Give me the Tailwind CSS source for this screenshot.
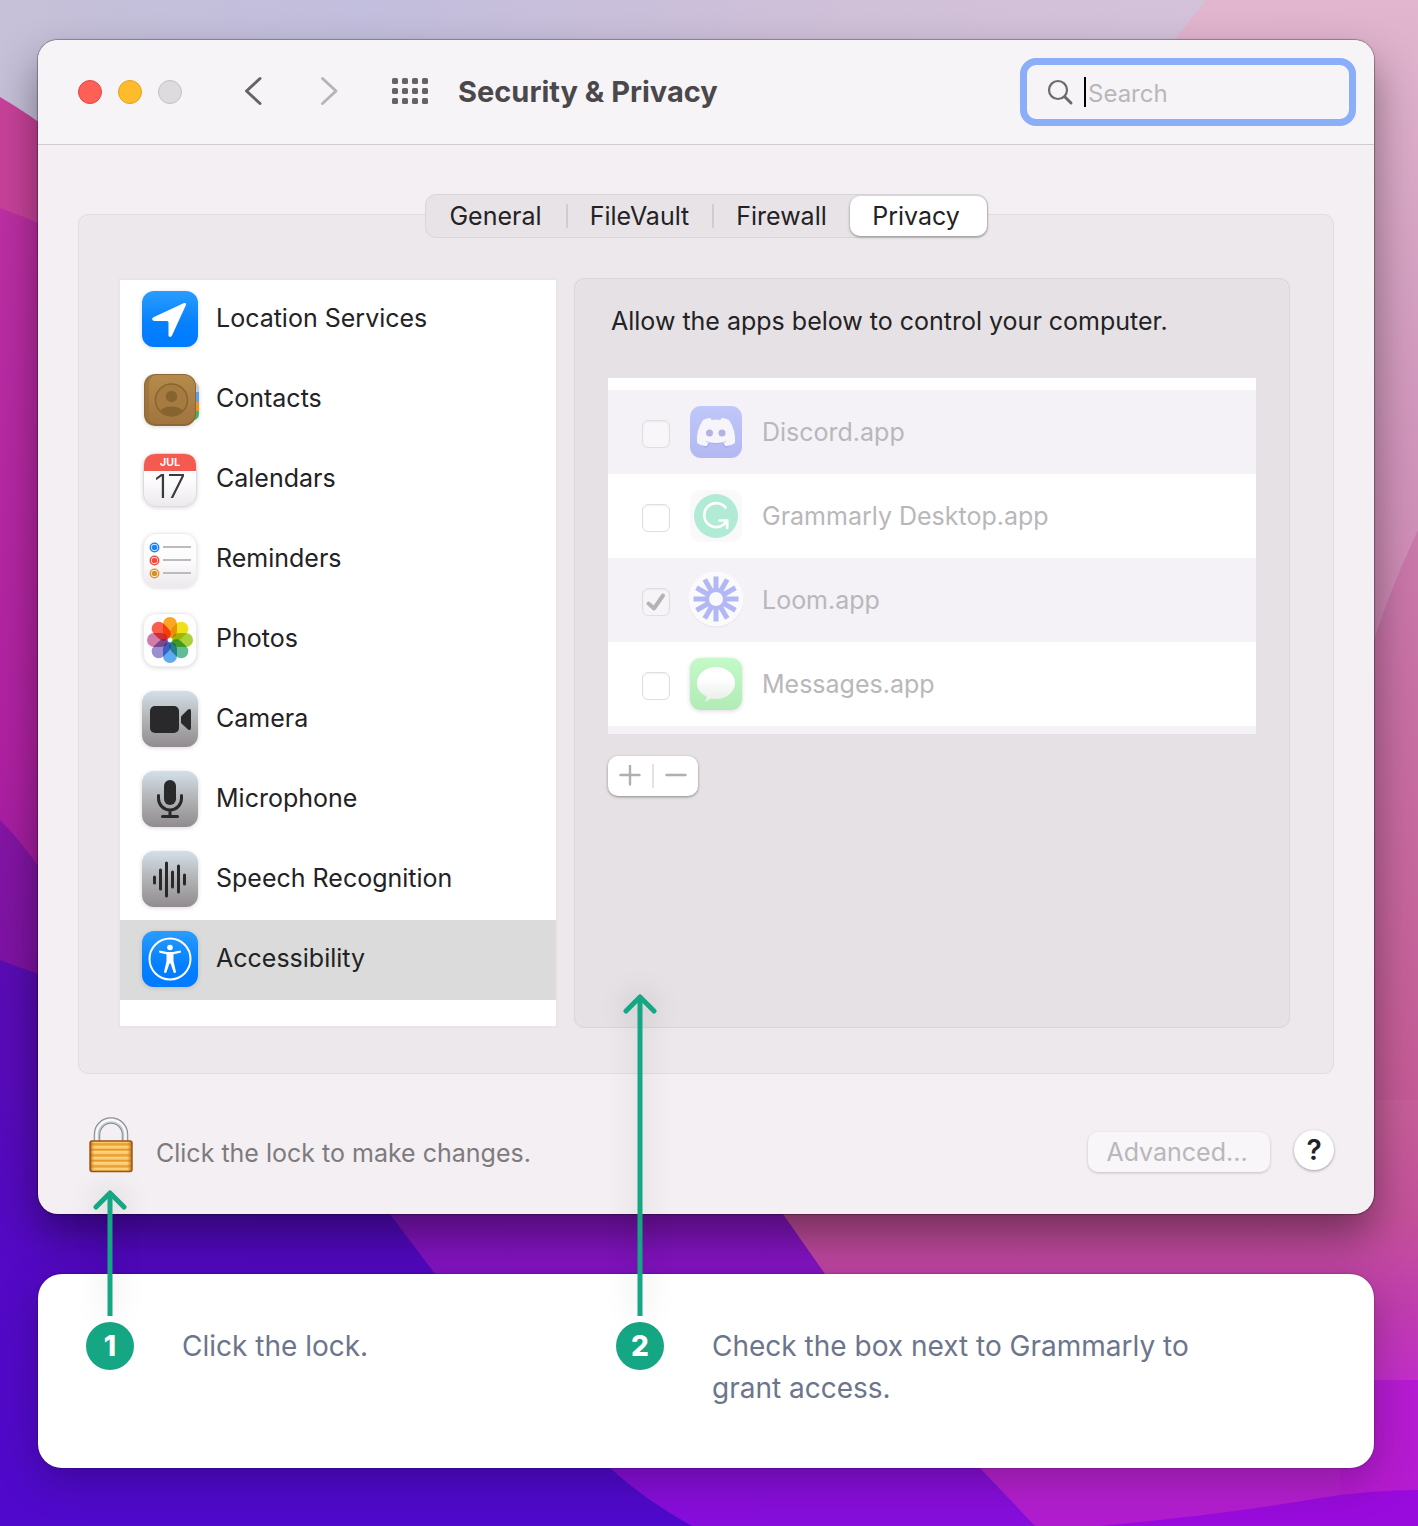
<!DOCTYPE html>
<html lang="en">
<head>
  <meta charset="UTF-8" />
  <meta name="viewport" content="width=device-width, initial-scale=1.0" />
  <title>Security &amp; Privacy</title>
  <script src="https://cdn.jsdelivr.net/npm/@tailwindcss/browser@4"></script>
</head>
<body class="relative min-h-screen font-['Inter',sans-serif] text-[#232224]">

  <!-- Wallpaper -->
  <svg class="absolute inset-0 w-full h-full" viewBox="0 0 1418 1526" preserveAspectRatio="none" aria-hidden="true">
    <defs>
      <linearGradient id="wpSky" x1="0" x2="1" y1="0" y2="0">
        <stop offset="0" stop-color="#c6c0d8" /><stop offset=".25" stop-color="#c2bedd" /><stop offset=".6" stop-color="#d0c0d8" /><stop offset="1" stop-color="#d6c3da" />
      </linearGradient>
      <linearGradient id="wpLeft" x1="0" x2="0" y1="0" y2="1">
        <stop offset="0" stop-color="#bd2fa4" /><stop offset=".5" stop-color="#b021a2" /><stop offset="1" stop-color="#7a0fa6" />
      </linearGradient>
      <linearGradient id="wpBlue" x1="0" x2="0" y1="0" y2="1">
        <stop offset="0" stop-color="#5a0cb4" /><stop offset=".5" stop-color="#5409c4" /><stop offset="1" stop-color="#4f09cc" />
      </linearGradient>
      <linearGradient id="wpPurple" x1="0" x2="0" y1="0" y2="1">
        <stop offset="0" stop-color="#8518b8" /><stop offset="1" stop-color="#870ddc" />
      </linearGradient>
      <linearGradient id="wpRight" x1="0" x2="0" y1="0" y2="1">
        <stop offset="0" stop-color="#e2b6cf" /><stop offset=".2" stop-color="#d5a0c2" /><stop offset=".4" stop-color="#cf8ab5" /><stop offset=".7" stop-color="#c8649a" /><stop offset=".8" stop-color="#c4509a" /><stop offset=".86" stop-color="#c03cb0" /><stop offset=".91" stop-color="#c22ccc" /><stop offset="1" stop-color="#b01bd0" />
      </linearGradient>
    </defs>
    <rect width="1418" height="1526" fill="url(#wpSky)" />
    <path d="M1206 0H1418V1526H700V600Q1080 160 1206 0Z" fill="url(#wpRight)" />
    <path d="M1418 530Q1390 590 1374 640V1100H1418Z" fill="#c24f95" opacity=".35" />
    <path d="M0 97Q60 132 120 190V1300H0Z" fill="#c8429a" />
    <path d="M0 208Q60 228 120 270V1300H0Z" fill="url(#wpLeft)" />
    <path d="M0 820Q30 850 60 900V1100H0Z" fill="#6d0fa6" opacity=".6" />
    <path d="M300 1100H700L783 1214L825 1274L980 1468L1035 1526H600Z" fill="url(#wpPurple)" />
    <path d="M0 960L38 974Q300 1080 390 1214L435 1274L610 1468Q645 1500 692 1526H0Z" fill="url(#wpBlue)" />
    <path d="M1340 1380H1418V1526H1340Z" fill="#b51bd0" />
    <path d="M1100 1526Q1230 1514 1320 1498Q1370 1490 1418 1490V1526Z" fill="#990bdc" />
  </svg>

  <main class="relative pt-10 pb-[58px] pl-[38px] pr-11">

    <!-- Preferences window -->
    <section class="rounded-[20px] bg-[#f3eff3] shadow-[0_0_1px_1px_rgba(0,0,0,0.3),0_22px_44px_rgba(0,0,0,0.42)]">

      <!-- Title bar -->
      <header class="flex items-center h-[105px] pl-10 pr-[18px] rounded-t-[20px] bg-[#f6f4f7] border-b border-[#cfcbcf]">
        <div class="flex gap-4">
          <button aria-label="Close" class="size-6 rounded-full bg-[#fe5f57] border border-[#e2453e]"></button>
          <button aria-label="Minimize" class="size-6 rounded-full bg-[#febb2c] border border-[#e1a01e]"></button>
          <button aria-label="Zoom" disabled class="size-6 rounded-full bg-[#dddbdd] border border-[#c3c1c3]"></button>
        </div>
        <button aria-label="Back" class="ml-[60px]">
          <svg class="w-6 h-8" viewBox="0 0 24 32" fill="none" stroke="#656366" stroke-width="3" stroke-linecap="round" stroke-linejoin="round"><path d="M18 2.500L4.500 15L18 27.500" /></svg>
        </button>
        <button aria-label="Forward" disabled class="ml-[52px]">
          <svg class="w-6 h-8" viewBox="0 0 24 32" fill="none" stroke="#b7b5b8" stroke-width="3" stroke-linecap="round" stroke-linejoin="round"><path d="M4.500 2.500L18 15L4.500 27.500" /></svg>
        </button>
        <button aria-label="Show all" class="ml-[50px]">
          <svg class="w-9 h-7" viewBox="0 0 36 28" fill="#656366">
            <rect x="0" y="0" width="6" height="6" rx="1.500" /><rect x="10" y="0" width="6" height="6" rx="1.500" /><rect x="20" y="0" width="6" height="6" rx="1.500" /><rect x="30" y="0" width="6" height="6" rx="1.500" />
            <rect x="0" y="10" width="6" height="6" rx="1.500" /><rect x="10" y="10" width="6" height="6" rx="1.500" /><rect x="20" y="10" width="6" height="6" rx="1.500" /><rect x="30" y="10" width="6" height="6" rx="1.500" />
            <rect x="0" y="20" width="6" height="6" rx="1.500" /><rect x="10" y="20" width="6" height="6" rx="1.500" /><rect x="20" y="20" width="6" height="6" rx="1.500" /><rect x="30" y="20" width="6" height="6" rx="1.500" />
          </svg>
        </button>
        <h1 class="ml-[30px] text-[29px] leading-8 font-bold text-[#4a484b]">Security &amp; Privacy</h1>
        <label class="ml-auto flex items-center w-[336px] h-[68px] pl-5 pr-3 rounded-2xl border-[7px] border-[#8aaef8] bg-[#f6f4f7]">
          <svg class="w-7 h-7 shrink-0" viewBox="0 0 28 28" fill="none" stroke="#6c6a6d" stroke-linecap="round" aria-hidden="true"><circle cx="11" cy="12" r="9" stroke-width="2.200" /><path d="M18 19L24 25" stroke-width="3" /></svg>
          <span class="ml-[9px] w-0.5 h-[30px] shrink-0 bg-black"></span>
          <input type="text" placeholder="Search" aria-label="Search" class="ml-0.5 pt-1 w-full min-w-0 bg-transparent text-2xl leading-8 outline-none placeholder:text-[#b9b7ba]" />
        </label>
      </header>

      <div class="px-10 pt-[49px] pb-[42px]">

        <!-- Tabs -->
        <nav class="relative z-10 flex justify-center -mb-6">
          <div class="flex items-center h-11 rounded-[11px] bg-[#e7e3e7] border border-[#d9d6d9] text-[25px] leading-8">
            <button class="w-[142px] border-r-2 border-[#d0cdd0] h-6 flex items-center justify-center">General</button>
            <button class="w-[146px] border-r-2 border-[#d0cdd0] h-6 flex items-center justify-center">FileVault</button>
            <button class="w-[136px] h-6 flex items-center justify-center">Firewall</button>
            <button class="w-[137px] h-10 pr-1 flex items-center justify-center rounded-[10px] bg-white shadow-[0_1px_3px_rgba(0,0,0,0.4)]">Privacy</button>
          </div>
        </nav>

        <div class="flex gap-[18px] pt-[63px] pb-[45px] pl-[41px] pr-[43px] rounded-[10px] bg-[#ece8ec] border border-[#e0dce0]">

          <!-- Categories -->
          <ul class="w-[436px] shrink-0 mt-0.5 mb-0.5 pb-[26px] bg-white outline-2 outline-[#e8e4e8] text-[25px] leading-8">
            <li>
              <button class="flex items-center gap-[18px] w-full h-20 pl-[22px] pb-1 text-left">
                <svg class="size-14 shrink-0 mt-0.5 drop-shadow-sm" viewBox="0 0 56 56" aria-hidden="true">
                  <defs><linearGradient id="blue" x1="0" x2="0" y1="0" y2="1"><stop offset="0" stop-color="#2a9cff" /><stop offset=".6" stop-color="#0480ff" /><stop offset="1" stop-color="#007aff" /></linearGradient></defs>
                  <rect width="56" height="56" rx="12" fill="url(#blue)" />
                  <path d="M41.500 12.200Q45 11 43.700 14.600L30 44.500Q28.500 47 26.500 45V31.500Q26.500 30 25 30H12Q8.500 28.500 11.500 26.300Z" fill="#fff" />
                </svg>
                Location Services
              </button>
            </li>
            <li>
              <button class="flex items-center gap-[18px] w-full h-20 pl-[22px] pb-1 text-left">
                <svg class="size-14 shrink-0 mt-0.5 overflow-visible drop-shadow-sm" viewBox="0 0 56 56" aria-hidden="true">
                  <defs><linearGradient id="leather" x1="0" x2="0" y1="0" y2="1"><stop offset="0" stop-color="#b58b4c" /><stop offset="1" stop-color="#a2743f" /></linearGradient></defs>
                  <path d="M48 10Q57 10 57 18V22H48Z" fill="#c9c9cb" /><path d="M48 21H57V31H48Z" fill="#54a7ee" /><path d="M48 31H57V40H48Z" fill="#ee9420" /><path d="M48 40H57V43Q57 49 48 50Z" fill="#3fb565" />
                  <rect x="2" y="3" width="52" height="52" rx="12" fill="#8d6835" />
                  <rect x="3" y="4" width="50" height="49" rx="11" fill="url(#leather)" />
                  <path d="M14 3Q2 3 2 15V43Q2 53 9 54Q7 50 7 43V15Q7 6 14 3Z" fill="#8f6936" opacity=".5" />
                  <circle cx="29.500" cy="29" r="16" fill="#a67b42" stroke="#87642f" stroke-width="1.500" />
                  <circle cx="29.500" cy="25.500" r="5.800" fill="#87642f" />
                  <path d="M18.500 40Q21 35.500 29.500 35.500T40.500 40Q36 45 29.500 45T18.500 40Z" fill="#87642f" />
                </svg>
                Contacts
              </button>
            </li>
            <li>
              <button class="flex items-center gap-[18px] w-full h-20 pl-[22px] pb-1 text-left">
                <svg class="size-14 shrink-0 mt-0.5 drop-shadow-sm" viewBox="0 0 56 56" aria-hidden="true">
                  <defs><linearGradient id="paper" x1="0" x2="0" y1="0" y2="1"><stop offset="0" stop-color="#fff" /><stop offset=".5" stop-color="#fdfcfd" /><stop offset="1" stop-color="#ece9ed" /></linearGradient></defs>
                  <rect x="1.500" y="2.500" width="53" height="53" rx="12.500" fill="url(#paper)" stroke="#dddadf" />
                  <path d="M2 20V15Q2 3 14 3H42Q54 3 54 15V20Z" fill="#f55a50" />
                  <text x="28" y="15" text-anchor="middle" font-family="Inter" font-size="11" font-weight="700" fill="#fff">JUL</text>
                  <text x="28" y="47" text-anchor="middle" font-family="Inter" font-size="33" font-weight="300" fill="#3b393d">17</text>
                </svg>
                Calendars
              </button>
            </li>
            <li>
              <button class="flex items-center gap-[18px] w-full h-20 pl-[22px] pb-1 text-left">
                <svg class="size-14 shrink-0 mt-0.5 drop-shadow-sm" viewBox="0 0 56 56" aria-hidden="true">
                  <rect x="1.500" y="2.500" width="53" height="53" rx="12.500" fill="url(#paper)" stroke="#efecf0" />
                  <path d="M21 16H49M21 29H49M21 42H49" stroke="#bcbabd" stroke-width="2" />
                  <g fill="#fff" stroke-width="1.500"><circle cx="12.500" cy="16.500" r="4.200" stroke="#1a84f5" /><circle cx="12.500" cy="29.500" r="4.200" stroke="#ee4b40" /><circle cx="12.500" cy="42.500" r="4.200" stroke="#e2982c" /></g>
                  <circle cx="12.500" cy="16.500" r="2.800" fill="#1a84f5" /><circle cx="12.500" cy="29.500" r="2.800" fill="#ee4b40" /><circle cx="12.500" cy="42.500" r="2.800" fill="#d98f28" />
                </svg>
                Reminders
              </button>
            </li>
            <li>
              <button class="flex items-center gap-[18px] w-full h-20 pl-[22px] pb-1 text-left">
                <svg class="size-14 shrink-0 mt-0.5 drop-shadow-sm" viewBox="0 0 56 56" aria-hidden="true">
                  <rect x="1.500" y="2.500" width="53" height="53" rx="12.500" fill="#fefefe" stroke="#efecf0" />
                  <g class="isolate">
                    <rect class="mix-blend-multiply" x="21" y="6" width="14" height="21" rx="7" fill="#fba524" />
                    <rect class="mix-blend-multiply" x="21" y="6" width="14" height="21" rx="7" fill="#efe018" transform="rotate(45 28 29)" />
                    <rect class="mix-blend-multiply" x="21" y="6" width="14" height="21" rx="7" fill="#a9d13a" transform="rotate(90 28 29)" />
                    <rect class="mix-blend-multiply" x="21" y="6" width="14" height="21" rx="7" fill="#5fbd97" transform="rotate(135 28 29)" />
                    <rect class="mix-blend-multiply" x="21" y="6" width="14" height="21" rx="7" fill="#62aaf0" transform="rotate(180 28 29)" />
                    <rect class="mix-blend-multiply" x="21" y="6" width="14" height="21" rx="7" fill="#9a8fd0" transform="rotate(225 28 29)" />
                    <rect class="mix-blend-multiply" x="21" y="6" width="14" height="21" rx="7" fill="#d17dac" transform="rotate(270 28 29)" />
                    <rect class="mix-blend-multiply" x="21" y="6" width="14" height="21" rx="7" fill="#fb5c4c" transform="rotate(315 28 29)" />
                  </g>
                  <circle cx="28" cy="29" r="1.500" fill="#fff" />
                </svg>
                Photos
              </button>
            </li>
            <li>
              <button class="flex items-center gap-[18px] w-full h-20 pl-[22px] pb-1 text-left">
                <svg class="size-14 shrink-0 mt-0.5 drop-shadow-sm" viewBox="0 0 56 56" aria-hidden="true">
                  <defs><linearGradient id="grey" x1="0" x2="0" y1="0" y2="1"><stop offset="0" stop-color="#d3e0e8" /><stop offset=".5" stop-color="#b2b3b5" /><stop offset="1" stop-color="#918b90" /></linearGradient></defs>
                  <rect width="56" height="56" rx="12" fill="url(#grey)" />
                  <rect x="8" y="15" width="29" height="27" rx="5" fill="#29282a" />
                  <path d="M39 25.500L46 18.500Q49 17 49 20V37Q49 40 46 38.500L39 32Z" fill="#29282a" />
                </svg>
                Camera
              </button>
            </li>
            <li>
              <button class="flex items-center gap-[18px] w-full h-20 pl-[22px] pb-1 text-left">
                <svg class="size-14 shrink-0 mt-0.5 drop-shadow-sm" viewBox="0 0 56 56" aria-hidden="true">
                  <rect width="56" height="56" rx="12" fill="url(#grey)" />
                  <rect x="22" y="9" width="12" height="25" rx="6" fill="#29282a" />
                  <path d="M16.500 24.500V27.500A11.500 11.500 0 0 0 39.500 27.500V24.500M28 39V45.500M20.500 45.500H35.500" fill="none" stroke="#29282a" stroke-width="3" stroke-linecap="round" />
                </svg>
                Microphone
              </button>
            </li>
            <li>
              <button class="flex items-center gap-[18px] w-full h-20 pl-[22px] pb-1 text-left">
                <svg class="size-14 shrink-0 mt-0.5 drop-shadow-sm" viewBox="0 0 56 56" aria-hidden="true">
                  <rect width="56" height="56" rx="12" fill="url(#grey)" />
                  <path d="M12.500 26V32M18.500 19V38M24.500 12V45M30.500 21V36M36.500 15V41M42.500 24V33" stroke="#29282a" stroke-width="3" stroke-linecap="round" />
                </svg>
                Speech Recognition
              </button>
            </li>
            <li>
              <button aria-current="true" class="flex items-center gap-[18px] w-full h-20 pl-[22px] pb-1 text-left bg-[#dbdbdb]">
                <svg class="size-14 shrink-0 mt-0.5 drop-shadow-sm" viewBox="0 0 56 56" aria-hidden="true">
                  <rect width="56" height="56" rx="12" fill="url(#blue)" />
                  <circle cx="28" cy="28" r="20.500" fill="none" stroke="#fff" stroke-width="2" />
                  <circle cx="28" cy="16.500" r="2.800" fill="#fff" />
                  <path d="M17.500 19.500L25 21H31L38.500 19.500Q39.500 20.800 38.500 21.700L31.500 23.200V30L34 41Q33 42.800 31.700 41.500L28.500 32.500H27.500L24.300 41.500Q23 42.800 22 41L24.500 30V23.200L17.500 21.700Q16.500 20.500 17.500 19.500Z" fill="#fff" />
                </svg>
                Accessibility
              </button>
            </li>
          </ul>

          <!-- Apps allowed to control the computer -->
          <div class="flex-1 min-w-0 px-[33px] pt-[26px] rounded-[10px] bg-[#e5e1e5] border border-[#d9d6d9]">
            <p class="pl-[3px] text-[25px] leading-8">Allow the apps below to control your computer.</p>
            <ul class="mt-[41px] pt-3 pb-2 bg-[linear-gradient(to_top,#f4f2f6_8px,white_8px)] text-[25px] leading-8 text-[#b9b7ba]">
              <li class="flex items-center h-[84px] pl-[34px] bg-[#f4f2f6]">
                <input type="checkbox" id="discord" disabled class="appearance-none size-7 mt-1 rounded-md border border-[#e1dde2] bg-[#f8f6f9] shadow-[inset_0_1px_2px_rgba(0,0,0,0.06)]" />
                <label for="discord" class="flex items-center gap-5 ml-5">
                  <svg class="size-[52px]" viewBox="0 0 52 52" aria-hidden="true">
                    <defs><linearGradient id="discordBg" x1="0" x2="0" y1="0" y2="1"><stop offset="0" stop-color="#c0c7fa" /><stop offset="1" stop-color="#b3b8f2" /></linearGradient></defs>
                    <rect width="52" height="52" rx="11" fill="url(#discordBg)" />
                    <path d="M7 37L15 42Q18 43 19 38H33Q34 43 37 42L45 37Q40 40 35 37H17Q12 40 7 37Z" fill="#a3a5dc" opacity=".5" />
                    <path d="M13 14Q17 12 20.500 12L21.500 14Q26 13.200 30.500 14L31.500 12Q35 12 39 14Q46 24 45 37Q40.500 40.500 35.500 40L33.500 37Q36 36 37 35Q26 39 15 35Q16 36 18.500 37L16.500 40Q11.500 40.500 7 37Q6 24 13 14Z" fill="#f6f5fa" />
                    <circle cx="19.500" cy="27" r="3.500" fill="#b5b1e0" /><circle cx="32" cy="27" r="3.500" fill="#b5b1e0" />
                  </svg>
                  Discord.app
                </label>
              </li>
              <li class="flex items-center h-[84px] pl-[34px]">
                <input type="checkbox" id="grammarly" disabled class="appearance-none size-7 mt-1 rounded-md border border-[#e1dde2] bg-white shadow-[inset_0_1px_2px_rgba(0,0,0,0.06)]" />
                <label for="grammarly" class="flex items-center gap-5 ml-5">
                  <svg class="size-[52px]" viewBox="0 0 52 52" aria-hidden="true">
                    <rect width="52" height="52" rx="11" fill="#f9f8fa" />
                    <circle cx="26" cy="26" r="22" fill="#b1ebd6" />
                    <path d="M35.500 17.500A12 12 0 1 0 36 32M29.500 30.500H37.200V38" fill="none" stroke="#fff" stroke-width="2.600" stroke-linecap="round" />
                  </svg>
                  Grammarly Desktop.app
                </label>
              </li>
              <li class="flex items-center h-[84px] pl-[34px] bg-[#f4f2f6]">
                <span class="relative size-7 mt-1">
                  <input type="checkbox" id="loom" checked disabled class="appearance-none block size-7 rounded-md border border-[#e1dde2] bg-[#f6f4f7] shadow-[inset_0_1px_2px_rgba(0,0,0,0.06)]" />
                  <svg class="absolute inset-0 size-7" viewBox="0 0 28 28" fill="none" stroke="#b5b3b6" stroke-width="4" stroke-linecap="round" stroke-linejoin="round" aria-hidden="true"><path d="M6.500 15.500L12 20.500L21 7.500" /></svg>
                </span>
                <label for="loom" class="flex items-center gap-[18px] ml-[18px]">
                  <svg class="size-14" viewBox="0 0 56 56" aria-hidden="true">
                    <circle cx="28" cy="28" r="27.500" fill="#e6e3e9" /><circle cx="28" cy="27" r="27.500" fill="#faf9fb" />
                    <g stroke="#b3b8f4" stroke-width="5"><path d="M28 4.500V49.500M5.500 27H50.500M16.750 7.500L39.250 46.500M39.250 7.500L16.750 46.500M8.500 15.750L47.500 38.250M8.500 38.250L47.500 15.750" /></g>
                    <circle cx="28" cy="27" r="9" fill="#faf9fb" stroke="#b3b8f4" stroke-width="4" />
                  </svg>
                  Loom.app
                </label>
              </li>
              <li class="flex items-center h-[84px] pl-[34px]">
                <input type="checkbox" id="messages" disabled class="appearance-none size-7 mt-1 rounded-md border border-[#e1dde2] bg-white shadow-[inset_0_1px_2px_rgba(0,0,0,0.06)]" />
                <label for="messages" class="flex items-center gap-5 ml-5">
                  <svg class="size-[52px] drop-shadow-sm" viewBox="0 0 52 52" aria-hidden="true">
                    <defs>
                      <linearGradient id="msgBg" x1="0" x2="0" y1="0" y2="1"><stop offset="0" stop-color="#c3fac8" /><stop offset="1" stop-color="#b2ebb6" /></linearGradient>
                      <linearGradient id="msgBubble" x1="0" x2="0" y1="0" y2="1"><stop offset=".3" stop-color="#fff" /><stop offset="1" stop-color="#e9eee9" /></linearGradient>
                    </defs>
                    <rect width="52" height="52" rx="11" fill="url(#msgBg)" />
                    <path d="M26 9C36.500 9 45 16 45 25S36.500 41 26 41Q23.500 41 21 40.500Q18.500 43 14.500 43.500Q17 41 16.500 38.500C10.500 35.500 7 31 7 25C7 16 15.500 9 26 9Z" fill="url(#msgBubble)" />
                  </svg>
                  Messages.app
                </label>
              </li>
            </ul>
            <div class="inline-flex items-center h-10 mt-[22px] rounded-[10px] bg-white shadow-[0_1px_3px_rgba(0,0,0,0.4)]">
              <button aria-label="Add" disabled class="w-[46px] h-6 flex items-center justify-center border-r-2 border-[#e7e1e5]">
                <svg class="w-[22px] h-[22px]" viewBox="0 0 22 22" stroke="#b0aeb1" stroke-width="2.400" stroke-linecap="round"><path d="M11 0.500V19.500M1.500 10H20.500" /></svg>
              </button>
              <button aria-label="Remove" disabled class="w-11 h-6 flex items-center justify-center">
                <svg class="w-[22px] h-[22px]" viewBox="0 0 22 22" stroke="#b0aeb1" stroke-width="2.400" stroke-linecap="round"><path d="M1.500 10H20.500" /></svg>
              </button>
            </div>
          </div>
        </div>

        <!-- Window footer -->
        <div class="flex items-center mt-11 pl-[11px] h-[54px]">
          <button aria-label="Unlock" class="shrink-0">
            <svg class="w-11 h-[54px] overflow-visible" viewBox="0 0 44 54" aria-hidden="true">
              <defs>
                <linearGradient id="brass" x1="0" x2="0" y1="0" y2="5.500" gradientUnits="userSpaceOnUse" spreadMethod="repeat"><stop offset="0" stop-color="#ffd886" /><stop offset=".5" stop-color="#fbc868" /><stop offset=".7" stop-color="#e2962e" /><stop offset="1" stop-color="#f3b248" /></linearGradient>
                <linearGradient id="brassEdge" x1="0" x2="1" y1="0" y2="0"><stop offset="0" stop-color="#a55a14" /><stop offset=".1" stop-color="#d98b2a" stop-opacity="0" /><stop offset=".88" stop-color="#d98b2a" stop-opacity="0" /><stop offset="1" stop-color="#b5691a" /></linearGradient>
              </defs>
              <path d="M8 25V16.500A14 14 0 0 1 36 16.500V25" fill="none" stroke="#85898f" stroke-width="6.500" />
              <path d="M8 25V16.500A14 14 0 0 1 36 16.500V25" fill="none" stroke="#c6cad0" stroke-width="4.600" />
              <path d="M7.500 25V16.500A14.500 14.500 0 0 1 36.500 16.500V25" fill="none" stroke="#f8f9fa" stroke-width="2.400" />
              <rect x="1" y="23" width="42" height="31" rx="2" fill="url(#brass)" />
              <rect x="1" y="23" width="42" height="31" rx="2" fill="url(#brassEdge)" />
              <rect x="1" y="23" width="42" height="30.500" rx="2" fill="none" stroke="#9c540f" stroke-width="1.400" />
            </svg>
          </button>
          <p class="ml-[23px] mt-4 text-[25px] leading-8 text-[#7d7b7e]">Click the lock to make changes.</p>
          <button disabled class="ml-auto mt-3.5 w-[182px] h-10 pr-1 rounded-[10px] bg-[#f8f6f9] text-[25px] leading-8 text-[#b9b7ba] shadow-[0_1px_3px_rgba(0,0,0,0.2)]">Advanced...</button>
          <button aria-label="Help" class="ml-6 mt-2.5 size-10 rounded-full bg-white text-[28px] leading-8 font-semibold shadow-[0_1px_3px_rgba(0,0,0,0.35)]">?</button>
        </div>
      </div>
    </section>

    <!-- Steps -->
    <ol class="flex mt-[60px] pt-12 pb-[59px] pl-12 pr-12 rounded-3xl bg-white text-[28px] leading-[42px] text-[#6d758d] shadow-[0_0_2px_rgba(0,0,0,0.4),0_12px_40px_rgba(0,0,0,0.25)]">
      <li class="flex w-[530px] shrink-0">
        <div class="relative size-12 shrink-0 rounded-full bg-[#15a683] text-white font-extrabold flex items-center justify-center">
          1
          <svg class="absolute bottom-[54px] left-[7px] w-[34px] h-[126px] overflow-visible drop-shadow-[0_0_14px_rgba(0,0,0,0.2)]" viewBox="0 0 34 126" fill="none" stroke="#15a683" stroke-width="5" stroke-linejoin="round" aria-hidden="true"><path d="M17 126V3" /><path d="M3 17L17 3L31 17" stroke-linecap="round" /></svg>
        </div>
        <p class="ml-12 mt-[3px]">Click the lock.</p>
      </li>
      <li class="flex">
        <div class="relative size-12 shrink-0 rounded-full bg-[#15a683] text-white font-extrabold flex items-center justify-center">
          2
          <svg class="absolute bottom-[54px] left-[7px] w-[34px] h-[322px] overflow-visible drop-shadow-[0_0_14px_rgba(0,0,0,0.2)]" viewBox="0 0 34 322" fill="none" stroke="#15a683" stroke-width="5" stroke-linejoin="round" aria-hidden="true"><path d="M17 322V3" /><path d="M3 17L17 3L31 17" stroke-linecap="round" /></svg>
        </div>
        <p class="ml-12 mt-[3px] max-w-[520px]">Check the box next to Grammarly to grant access.</p>
      </li>
    </ol>
  </main>

</body>
</html>
